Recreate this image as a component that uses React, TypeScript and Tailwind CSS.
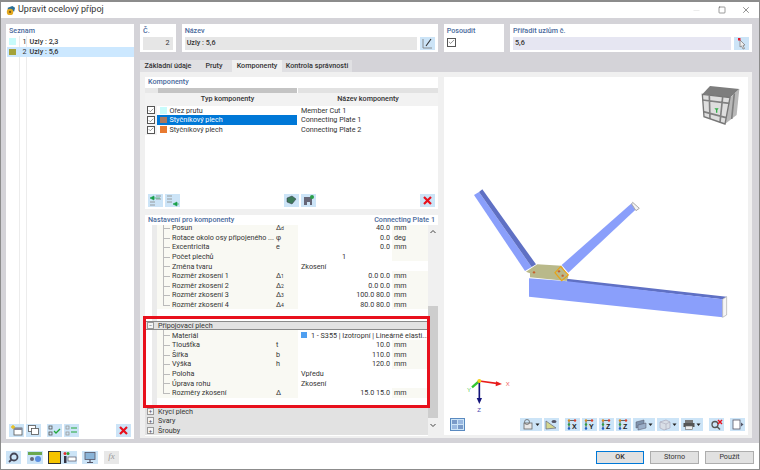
import type { ReactNode } from "react";
import { Check, Minus, Square, X } from "lucide-react";

type Row = { label: string; sym?: string; sub?: string; value?: string; unit?: string; left?: boolean; plain?: boolean; center?: boolean; swatch?: boolean };

const upperRows: Row[] = [
  { label: "Posun", sym: "Δ", sub: "d", value: "40.0", unit: "mm" },
  { label: "Rotace okolo osy připojeného ...", sym: "φ", value: "0.0", unit: "deg" },
  { label: "Excentricita", sym: "e", value: "0.0", unit: "mm" },
  { label: "Počet plechů", value: "1", center: true },
  { label: "Změna tvaru", value: "Zkosení", left: true, plain: true },
  { label: "Rozměr zkosení 1", sym: "Δ", sub: "1", value: "0.0 0.0", unit: "mm" },
  { label: "Rozměr zkosení 2", sym: "Δ", sub: "2", value: "0.0 0.0", unit: "mm" },
  { label: "Rozměr zkosení 3", sym: "Δ", sub: "3", value: "100.0 80.0", unit: "mm" },
  { label: "Rozměr zkosení 4", sym: "Δ", sub: "4", value: "80.0 80.0", unit: "mm" },
];

const plateRows: Row[] = [
  { label: "Materiál", value: "1 - S355 | Izotropní | Lineárně elasti...", left: true, plain: true, swatch: true },
  { label: "Tloušťka", sym: "t", value: "10.0", unit: "mm" },
  { label: "Šířka", sym: "b", value: "110.0", unit: "mm" },
  { label: "Výška", sym: "h", value: "120.0", unit: "mm" },
  { label: "Poloha", value: "Vpředu", left: true, plain: true },
  { label: "Úprava rohu", value: "Zkosení", left: true, plain: true },
  { label: "Rozměry zkosení", sym: "Δ", value: "15.0 15.0", unit: "mm" },
];

function Btn({ children, className = "" }: { children?: ReactNode; className?: string }) {
  return (
    <div className={`h-[13px] w-[15px] shrink-0 bg-[#cce4f7] flex items-center justify-center ${className}`}>
      <svg viewBox="0 0 15 13" className="h-[13px] w-[15px]">
        {children}
      </svg>
    </div>
  );
}

function DropBtn({ children }: { children: ReactNode }) {
  return (
    <div className="h-[13px] w-[22px] shrink-0 bg-[#cce4f7] flex items-center">
      <svg viewBox="0 0 22 13" className="h-[13px] w-[22px]">
        {children}
        <path d="M15.5 5.5h4l-2 2.5z" fill="#222" />
      </svg>
    </div>
  );
}

function RedX() {
  return <path d="M4 3l7 7M11 3l-7 7" stroke="#e8101c" strokeWidth="2.2" />;
}

function AxisIcon({ label }: { label: string }) {
  return (
    <>
      <path d="M4 2.5h6M4 2.5v8" stroke="#444" strokeWidth="0.8" />
      <circle cx="4" cy="2.5" r="1.2" fill="#d98b1f" />
      <circle cx="10" cy="2.5" r="1.2" fill="#d9402a" />
      <circle cx="4" cy="6.5" r="1.2" fill="#2f9e44" />
      <circle cx="4" cy="10.5" r="1.2" fill="#1f5fc4" />
      <text x="7" y="11" fontSize="7" fontWeight="700" fill="#222" fontFamily="'Liberation Sans', sans-serif">
        {label}
      </text>
    </>
  );
}

function TreeRow({ row, last }: { row: Row; last?: boolean }) {
  return (
    <div className="flex h-[9.6px] items-center whitespace-nowrap leading-none text-[#333]">
      <div className="relative flex h-full w-[118px] shrink-0 items-center bg-[#f9f9f3] pl-[15px]">
        <span className={`absolute left-[6px] top-0 w-px bg-[#bbb] ${last ? "h-[5px]" : "h-full"}`} />
        <span className="absolute left-[6px] top-[5px] h-px w-[7px] bg-[#bbb]" />
        {row.label}
      </div>
      <div className="flex h-full w-[23px] shrink-0 items-center bg-[#f9f9f3] pl-[1px]">
        {row.sym}
        {row.sub && <span className="mt-[2px] text-[5px]">{row.sub}</span>}
      </div>
      {row.plain ? (
        <div className="flex h-full flex-1 items-center gap-[4px] bg-white pl-[3px]">
          {row.swatch && <span className="h-[6px] w-[6px] bg-[#4f9ff0]" />}
          {row.value}
        </div>
      ) : (
        <>
          <div className={`flex h-full w-[94px] shrink-0 items-center bg-white pr-[2px] ${row.center ? "justify-center" : "justify-end"}`}>{row.value}</div>
          <div className="flex h-full flex-1 items-center bg-[#f9f9f3] pl-[2px]">{row.unit}</div>
        </>
      )}
    </div>
  );
}

function Section({ label, open }: { label: string; open?: boolean }) {
  return (
    <div className={`flex h-[9.6px] items-center gap-[4px] bg-[#e2e2e2] pl-[2px] leading-none text-[#333] ${open ? "outline outline-1 -outline-offset-1 outline-[#8a8a8a]" : ""}`}>
      <span className="flex h-[7px] w-[7px] items-center justify-center border border-[#999] bg-[#f4f4f4] text-[6px] leading-none text-[#555]">{open ? "−" : "+"}</span>
      {label}
    </div>
  );
}

function TypeRow({ swatch, type, name, selected }: { swatch: string; type: string; name: string; selected?: boolean }) {
  return (
    <div className="flex h-[9.7px] items-center leading-none text-[#333]">
      <div className="flex h-full w-[12px] items-center justify-center bg-[#f3f3f3]">
        <span className="flex h-[8px] w-[8px] items-center justify-center border border-[#555] bg-white">
          <Check size={7} strokeWidth={2} className="text-[#444]" />
        </span>
      </div>
      <div className={`flex h-full w-[140px] items-center gap-[3px] pl-[3px] ${selected ? "bg-[#0078d7] text-white" : "bg-white"}`}>
        <span className="h-[6.5px] w-[6.5px] shrink-0" style={{ backgroundColor: swatch }} />
        {type}
      </div>
      <div className="ml-px flex-1 pl-[3px]">{name}</div>
    </div>
  );
}

function ModelView() {
  return (
    <svg viewBox="444 77 304 341" className="h-[341px] w-[304px]">
      {/* connection model, traced from the 3x crop */}
      <g transform="translate(450 170) scale(0.3333)">
        <polygon points="72,75 87,66 245,291 225,303" fill="#8a9ffb" />
        <polygon points="87,66 97,58 258,283 245,291" fill="#5f70c4" />
        <polygon points="545,100 558,118 355,308 335,285" fill="#8a9ffb" />
        <polygon points="548,97 568,115 558,122 545,102" fill="#f4f4f4" stroke="#a9a9a9" strokeWidth="3" />
        <polygon points="350,326 830,380 818,388 352,336" fill="#5f70c4" />
        <polygon points="237,325 352,334 818,388 818,442 237,380" fill="#8a9ffb" />
        <polygon points="818,388 830,380 830,435 818,442" fill="#f6f6f6" stroke="#a9a9a9" strokeWidth="2" />
        <polygon points="228,305 262,283 335,287 355,320 350,333 240,322 240,310" fill="#b9b98a" />
        <polygon points="332,290 355,315 335,332 315,308" fill="none" stroke="#e8a317" strokeWidth="3.5" />
        <circle cx="252" cy="307" r="3.5" fill="#c8602a" />
        <circle cx="327" cy="304" r="3.5" fill="#c8602a" />
        <circle cx="338" cy="317" r="3.5" fill="#c8602a" />
      </g>
      {/* view cube */}
      <g transform="translate(680 75) scale(0.3333)">
        <polygon points="90,33 178,42 150,68 67,58" fill="#7d7d7d" />
        <polygon points="150,68 178,42 170,120 135,147" fill="#b8b8b8" />
        <polygon points="67,58 150,68 135,147 72,125" fill="#dedede" />
        <path d="M68 75 148 85M70 110 138 128M88 62 90 132M128 66 120 142M163 55 155 132" stroke="#808080" strokeWidth="5" fill="none" />
        <path d="M67 58 150 68 135 147 72 125z" stroke="#777" strokeWidth="4" fill="none" />
        <path d="M103 100h13l-4 5v8h-4v-8z" fill="#35b04a" />
      </g>
      {/* axes */}
      <g transform="translate(450 370) scale(0.3333)">
        <path d="M88 33 145 41" stroke="#e81c1c" strokeWidth="5" />
        <path d="M156 42 138 34 137 49z" fill="#e81c1c" />
        <path d="M88 33 66 52" stroke="#32c832" strokeWidth="7" />
        <path d="M88 33V88" stroke="#14147a" strokeWidth="5" />
        <path d="M88 102 80 84H96z" fill="#14147a" />
        <circle cx="88" cy="33" r="6" fill="#f2d21a" />
        <text x="167" y="49" fontSize="18" fill="#f06060" fontFamily="'Liberation Sans', sans-serif">X</text>
        <text x="51" y="66" fontSize="18" fill="#5acb5a" fontFamily="'Liberation Sans', sans-serif">Y</text>
        <text x="82" y="127" fontSize="18" fill="#4a4ab0" fontFamily="'Liberation Sans', sans-serif">Z</text>
      </g>
    </svg>
  );
}

export default function App() {
  return (
    <div className="relative flex h-[470px] w-[760px] flex-col overflow-hidden border border-t-2 border-[#8c8c8c] bg-white font-['Roboto','Noto_Sans',sans-serif] text-[7.2px]">
      {/* title bar */}
      <div className="flex h-[16px] shrink-0 items-center pl-[4px] pr-[8px] text-[#333]">
        <svg viewBox="0 0 12 12" className="mr-[2px] h-[11px] w-[11px]">
          <path d="M3 3 8 1l3 2-1 4-7-1z" fill="#2a6f97" />
          <circle cx="5.5" cy="7.5" r="3.5" fill="#e3a81f" />
          <circle cx="5.5" cy="7.5" r="1.2" fill="#7a5a12" />
        </svg>
        <span className="text-[9px]">Upravit ocelový přípoj</span>
        <Minus size={9} className="ml-auto text-[#ccc]" strokeWidth={1} />
        <Square size={8} className="ml-[17px] text-[#444]" strokeWidth={1.6} />
        <X size={10} className="ml-[15px] text-[#444]" strokeWidth={1.4} />
      </div>

      {/* dialog body */}
      <div className="flex h-[425px] shrink-0 gap-[6px] bg-[#d4d3d8] pl-[5px] pt-[6px]">
        {/* list panel */}
        <aside className="flex h-[415px] w-[128px] shrink-0 flex-col bg-white">
          <div className="flex h-[12px] items-center pl-[3px] pt-[2px] font-medium text-[#4a6a9c]">Seznam</div>
          <div className="relative flex-1 pl-px">
            <span className="absolute bottom-0 left-[13px] top-0 w-px bg-[#ececec]" />
            <span className="absolute bottom-0 left-[20px] top-0 w-px bg-[#ececec]" />
            <div className="relative flex h-[10.5px] items-center pl-[2px] leading-none text-[#333]">
              <span className="h-[6.5px] w-[6.5px] bg-[#c8fbfb]" />
              <span className="ml-[7px] w-[5px]">1</span>
              <span className="ml-[2px] font-medium">Uzly : 2,3</span>
            </div>
            <div className="relative flex h-[10.5px] items-center bg-[#cce8ff] pl-[2px] leading-none text-[#333]">
              <span className="h-[6.5px] w-[6.5px] bg-[#a3a33c]" />
              <span className="ml-[7px] w-[5px]">2</span>
              <span className="ml-[2px] font-medium">Uzly : 5,6</span>
            </div>
          </div>
          <div className="relative flex items-center gap-[2px] pb-[2px] pl-[3px] pr-[3px]">
            <Btn>
              <rect x="5" y="4" width="8" height="7" fill="#fff" stroke="#555" strokeWidth="0.8" />
              <rect x="5" y="4" width="8" height="2" fill="#889" />
              <path d="M4 1v4M2 3h4" stroke="#e8c020" strokeWidth="1.4" />
            </Btn>
            <Btn>
              <rect x="2.5" y="1.5" width="7" height="6" fill="#fff" stroke="#555" strokeWidth="0.8" />
              <rect x="5.5" y="4.5" width="7" height="6" fill="#fff" stroke="#555" strokeWidth="0.8" />
            </Btn>
            <Btn className="ml-[4px]">
              <rect x="2" y="2" width="3" height="3" fill="none" stroke="#555" strokeWidth="0.8" />
              <rect x="2" y="8" width="3" height="3" fill="none" stroke="#555" strokeWidth="0.8" />
              <path d="M7 7l2 2 4-4" fill="none" stroke="#22a83a" strokeWidth="1.3" />
            </Btn>
            <Btn>
              <rect x="2" y="2" width="3" height="3" fill="none" stroke="#999" strokeWidth="0.8" />
              <rect x="2" y="8" width="3" height="3" fill="none" stroke="#999" strokeWidth="0.8" />
              <path d="M7 4h6M7 8h6" stroke="#22a83a" strokeWidth="1.2" />
            </Btn>
            <Btn className="ml-auto">
              <RedX />
            </Btn>
          </div>
        </aside>

        <main className="flex w-[612px] shrink-0 flex-col">
          {/* header boxes */}
          <div className="flex h-[28px] gap-[6px]">
            <div className="flex w-[36px] flex-col bg-white px-[3px] pt-[2px]">
              <div className="h-[10px] font-medium text-[#4a6a9c]">Č.</div>
              <div className="mt-[1px] h-[12.5px] bg-[#e6e6e6] pr-[3px] text-right leading-[12px] text-[#333]">2</div>
            </div>
            <div className="flex w-[256px] flex-col bg-white px-[3px] pt-[2px]">
              <div className="h-[10px] font-medium text-[#4a6a9c]">Název</div>
              <div className="mt-[1px] flex gap-[3px]">
                <div className="h-[12.5px] w-[232px] bg-[#e6e6e6] pl-[2px] font-medium leading-[12px] text-[#333]">Uzly : 5,6</div>
                <Btn>
                  <path d="M3 2v9h9" fill="none" stroke="#777" strokeWidth="0.8" />
                  <path d="M6 9l5-7" stroke="#333" strokeWidth="1.1" />
                </Btn>
              </div>
            </div>
            <div className="flex w-[61px] flex-col bg-white px-[3px] pt-[2px]">
              <div className="h-[10px] font-medium text-[#4a6a9c]">Posoudit</div>
              <span className="mt-[1.5px] flex h-[9px] w-[9px] items-center justify-center border border-[#555]">
                <Check size={8} strokeWidth={2} className="text-[#444]" />
              </span>
            </div>
            <div className="flex w-[242px] flex-col bg-white px-[3px] pt-[2px]">
              <div className="h-[10px] font-medium text-[#4a6a9c]">Přiřadit uzlům č.</div>
              <div className="mt-[1px] flex gap-[3px]">
                <div className="h-[12.5px] w-[219px] bg-[#e6e6f2] pl-[2px] font-medium leading-[12px] text-[#333]">5,6</div>
                <Btn>
                  <path d="M6 3l5 5-2 .5 1.5 3-1.5.5-1.5-3L6 10z" fill="#eee" stroke="#777" strokeWidth="0.7" />
                  <rect x="4" y="1" width="2.5" height="2.5" fill="#e01c2c" />
                </Btn>
              </div>
            </div>
          </div>

          {/* tabs */}
          <div className="mt-[8px] flex h-[12px] leading-[12px] text-[#333]">
            <div className="w-[56px] bg-[#e0e0e3] text-center font-medium">Základní údaje</div>
            <div className="w-[36px] bg-[#e0e0e3] text-center font-medium">Pruty</div>
            <div className="w-[50px] bg-[#f0f0f0] text-center font-medium">Komponenty</div>
            <div className="w-[70px] bg-[#e0e0e3] text-center font-medium">Kontrola správnosti</div>
          </div>

          {/* tab page */}
          <div className="flex h-[366px] w-[612px] gap-[6px] bg-[#f0f0f0] pl-[5px] pt-[5px]">
            <div className="flex w-[293px] shrink-0 flex-col gap-[6px]">
              {/* components table */}
              <section className="flex h-[132px] flex-col bg-white">
                <div className="flex h-[11px] items-center pl-[3px] font-medium text-[#4a6a9c]">Komponenty</div>
                <div className="flex h-[5px]">
                  <div className="w-[13px] bg-[#e8e8e8]" />
                  <div className="w-[139px] bg-[#c4c4c4]" />
                  <div className="ml-px flex-1 bg-[#e2e2e2]" />
                </div>
                <div className="flex h-[12.5px] bg-[#f2f2f2] font-medium leading-[12px] text-[#333]">
                  <div className="ml-[13px] w-[139px] text-center">Typ komponenty</div>
                  <div className="ml-px flex-1 text-center">Název komponenty</div>
                </div>
                <TypeRow swatch="#c8fbfb" type="Ořez prutu" name="Member Cut 1" />
                <TypeRow swatch="#a87860" type="Styčníkový plech" name="Connecting Plate 1" selected />
                <TypeRow swatch="#e87a30" type="Styčníkový plech" name="Connecting Plate 2" />
                <div className="mt-auto flex gap-[2px] pb-[2px] pl-[3px] pr-[3px]">
                  <Btn>
                    <path d="M8 2h5M8 5h5M2 8h5M2 11h5" stroke="#888" strokeWidth="0.8" />
                    <path d="M2 4l4-2v4zM6 4h6" fill="#1aa04a" stroke="#1aa04a" strokeWidth="0.6" />
                  </Btn>
                  <Btn>
                    <path d="M2 2h5M2 5h5M2 8h5" stroke="#888" strokeWidth="0.8" />
                    <path d="M8 10l4-2v4zM12 10h2" fill="#1aa04a" stroke="#1aa04a" strokeWidth="0.6" />
                  </Btn>
                  <Btn className="ml-[102px]">
                    <path d="M3 4l5-2 4 3-4 5-5-2z" fill="#3d7a5a" stroke="#334" strokeWidth="0.5" />
                  </Btn>
                  <Btn>
                    <path d="M3 3h8v8h-2v-3H6v3H3z" fill="#667" />
                    <circle cx="11" cy="3" r="2" fill="#2aa04a" />
                  </Btn>
                  <Btn className="ml-auto">
                    <RedX />
                  </Btn>
                </div>
              </section>

              {/* settings tree */}
              <section className="flex h-[221px] flex-col bg-white">
                <div className="relative z-10 flex h-[10px] shrink-0 items-center justify-between bg-white px-[3px] font-medium text-[#4a6a9c]">
                  <span>Nastavení pro komponenty</span>
                  <span>Connecting Plate 1</span>
                </div>
                <div className="flex flex-1 overflow-hidden">
                  <div className="flex w-[283px] flex-col">
                    <div className="ml-[7px] -mt-[2px] border-l-[5px] border-[#ebebeb] pb-[11.5px]">
                      {upperRows.map((r, i) => (
                        <TreeRow key={r.label} row={r} last={i === upperRows.length - 1} />
                      ))}
                    </div>
                    <Section label="Připojovací plech" open />
                    <div className="ml-[7px] border-l-[5px] border-[#ebebeb] pb-[9px]">
                      {plateRows.map((r, i) => (
                        <TreeRow key={r.label} row={r} last={i === plateRows.length - 1} />
                      ))}
                    </div>
                    <Section label="Krycí plech" />
                    <Section label="Svary" />
                    <Section label="Šrouby" />
                  </div>
                  <div className="flex w-[10px] flex-col items-center bg-[#f0f0f0] text-[#555]">
                    <svg viewBox="0 0 8 6" className="mt-[4px] h-[6px] w-[8px]">
                      <path d="M1.5 4 4 1.5 6.5 4" fill="none" stroke="#444" />
                    </svg>
                    <div className="mt-[71px] h-[112px] w-full bg-[#cdcdcd]" />
                    <svg viewBox="0 0 8 6" className="mt-[4px] h-[6px] w-[8px]">
                      <path d="M1.5 2 4 4.5 6.5 2" fill="none" stroke="#444" />
                    </svg>
                  </div>
                </div>
              </section>
            </div>

            {/* 3D view */}
            <section className="flex h-[358px] w-[304px] shrink-0 flex-col bg-white">
              <div className="h-[341px]">
                <ModelView />
              </div>
              <div className="flex items-center pl-[6px]">
                <Btn className="outline outline-1 -outline-offset-1 outline-[#5a8ac0]">
                  <rect x="2" y="2" width="5" height="4" fill="#7a9ac8" />
                  <rect x="8" y="2" width="5" height="4" fill="#9ab8e0" />
                  <rect x="2" y="7" width="5" height="4" fill="#9ab8e0" />
                  <rect x="8" y="7" width="5" height="4" fill="#7a9ac8" />
                </Btn>
                <div className="ml-[55px]">
                  <DropBtn>
                    <rect x="4" y="5" width="8" height="6" fill="#e8e8e8" stroke="#666" strokeWidth="0.8" />
                    <circle cx="7" cy="4" r="2.5" fill="none" stroke="#666" strokeWidth="0.8" />
                  </DropBtn>
                </div>
                <div className="ml-[2px]">
                  <Btn>
                    <path d="M2 11 12 10 2 3z" fill="#d4d890" stroke="#667" strokeWidth="0.7" />
                    <ellipse cx="10" cy="3.5" rx="2.5" ry="1.5" fill="#556" />
                  </Btn>
                </div>
                <div className="ml-[6px] flex gap-[2px]">
                  <Btn><AxisIcon label="X" /></Btn>
                  <Btn><AxisIcon label="Y" /></Btn>
                  <Btn><AxisIcon label="Z" /></Btn>
                  <Btn><AxisIcon label="Z" /></Btn>
                </div>
                <div className="ml-[2px] flex gap-[2px]">
                  <DropBtn>
                    <path d="M3 4l8-2v6l-8 2z" fill="#7f93ad" stroke="#556" strokeWidth="0.5" />
                    <path d="M5 7l8-2v5l-8 2z" fill="#9aaec8" stroke="#556" strokeWidth="0.5" />
                  </DropBtn>
                  <DropBtn>
                    <path d="M3 4l6-2 4 2v6l-6 2-4-2z" fill="#d8dee6" stroke="#aab" strokeWidth="0.7" />
                    <path d="M3 4l6 2 4-2M9 6v6" fill="none" stroke="#aab" strokeWidth="0.6" />
                  </DropBtn>
                  <DropBtn>
                    <rect x="4" y="2" width="8" height="3" fill="#777" />
                    <rect x="2.5" y="5" width="11" height="4" fill="#555" />
                    <rect x="4.5" y="8" width="7" height="3.5" fill="#eee" stroke="#666" strokeWidth="0.6" />
                  </DropBtn>
                </div>
                <div className="ml-[6px]">
                  <Btn>
                    <circle cx="6" cy="6.5" r="3" fill="none" stroke="#555" strokeWidth="1.3" />
                    <path d="M8 8.5l3 3" stroke="#555" strokeWidth="1.5" />
                    <path d="M9 2l4 4M13 2 9 6" stroke="#e8101c" strokeWidth="1.4" />
                  </Btn>
                </div>
                <div className="ml-[6px]">
                  <Btn>
                    <rect x="3" y="2" width="7" height="9" fill="#fff" stroke="#556" strokeWidth="0.8" />
                    <path d="M11 4.5 13.5 6.5 11 8.5z" fill="#556" />
                  </Btn>
                </div>
              </div>
            </section>
          </div>
        </main>
      </div>

      {/* footer */}
      <div className="flex flex-1 items-center pl-[5px] pr-[5px] pt-[2px] text-[#333]">
        <Btn>
          <circle cx="8" cy="6" r="3.5" fill="none" stroke="#445" strokeWidth="1.8" />
          <path d="M5.5 8.5 3 11" stroke="#445" strokeWidth="1.8" />
        </Btn>
        <div className="ml-[6px] h-[13px] w-[16px] bg-[#cce4f7]">
          <svg viewBox="0 0 16 13" className="h-[13px] w-[16px]">
            <rect x="1" y="1" width="14" height="3" fill="#6aa84f" />
            <circle cx="5" cy="8" r="2" fill="#667" />
            <circle cx="11" cy="8" r="3" fill="#5a8ee0" />
          </svg>
        </div>
        <div className="ml-[5px] h-[13px] w-[13px] border border-[#333] bg-[#f5c400]" />
        <div className="h-[13px] w-[16px] bg-[#cce4f7]">
          <svg viewBox="0 0 16 13" className="h-[13px] w-[16px]">
            <circle cx="4" cy="2.5" r="1.5" fill="#e03030" />
            <circle cx="7" cy="2.5" r="1.5" fill="#30a030" />
            <rect x="3" y="5" width="2.5" height="7" fill="#334" />
            <rect x="7" y="6" width="8" height="4" fill="#fff" stroke="#556" strokeWidth="0.7" />
          </svg>
        </div>
        <div className="ml-[5px] h-[13px] w-[16px] bg-[#cce4f7]">
          <svg viewBox="0 0 16 13" className="h-[13px] w-[16px]">
            <rect x="3" y="1.5" width="10" height="7" fill="#8ab4d8" stroke="#556" strokeWidth="0.8" />
            <path d="M8 8.5v3M5 11.5h6" stroke="#556" strokeWidth="1.2" />
          </svg>
        </div>
        <div className="ml-[6px] flex h-[13px] w-[15px] items-center justify-center bg-[#e8e8e8] font-['Liberation_Serif',serif] text-[9px] italic text-[#999]">
          fx
        </div>
        <button className="ml-auto h-[13px] w-[48px] border-[1.5px] border-[#0078d7] bg-[#e1e1e1] font-medium leading-none">OK</button>
        <button className="ml-[6px] h-[13px] w-[49px] border border-[#adadad] bg-[#e1e1e1] leading-none">Storno</button>
        <button className="ml-[6px] h-[13px] w-[49px] border border-[#adadad] bg-[#e1e1e1] leading-none">Použít</button>
      </div>

      {/* red highlight drawn over the settings tree */}
      <div className="pointer-events-none absolute left-[142px] top-[314px] h-[92px] w-[287px] border-[3px] border-[#e8101c]" />
    </div>
  );
}
